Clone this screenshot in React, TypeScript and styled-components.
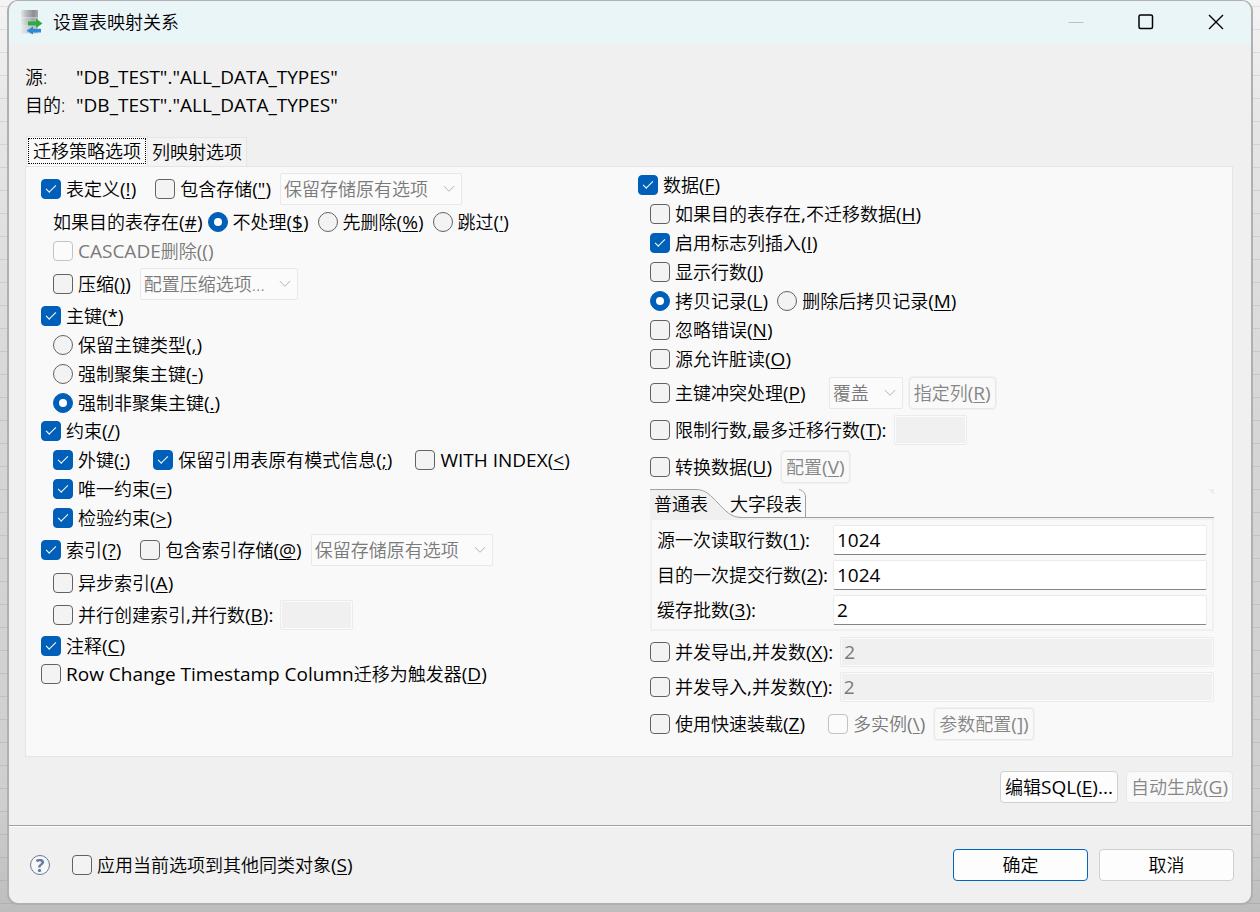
import React, { useId, useState } from "react";
import styled, { createGlobalStyle, css } from "styled-components";

const GlobalStyle = createGlobalStyle`
  *, *::before, *::after { box-sizing: border-box; }
  body {
    margin: 0;
    min-height: 100vh;
    padding: 0 7px 7px;
    font: 350 18px/28px "Open Sans", "Noto Sans CJK SC", sans-serif;
    color: #000;
    background:
      repeating-linear-gradient(to bottom, transparent 0 6px, rgba(0, 0, 0, 0.08) 6px 7px, transparent 7px 23px),
      linear-gradient(to bottom, #f4f4f4 0, #e6e6e6 120px, #d6d6d6 420px, #cfcfcf 800px, #bdbdbd 100%);
  }
  button, input, select { font: inherit; color: inherit; margin: 0; }
  u { text-decoration-thickness: 1px; text-underline-offset: 2px; }
`;

const latinText = css`
  font-size: 19px;
  font-weight: 400;
`;

const Latin = styled.span`
  ${latinText}
  line-height: 1;
`;

const Dialog = styled.main`
  display: flex;
  flex-direction: column;
  border: 2px solid #b0b0b0;
  border-top-width: 1px;
  border-radius: 11px;
  background: #f0f0f0;
  overflow: hidden;
`;

const TitleBar = styled.header`
  display: flex;
  align-items: center;
  height: 43px;
  padding: 0 0 2px 12px;
  background: #eaf5f8;
`;

const Title = styled.h1`
  flex: 1;
  margin: 0 0 0 10px;
  font-size: 18px;
  font-weight: inherit;
`;

const WindowButton = styled.button`
  display: grid;
  place-items: center;
  width: 70px;
  height: 40px;
  padding: 0;
  border: 0;
  background: none;
`;

const Body = styled.div`
  padding: 19px 18px 22px 16px;
`;

const Names = styled.dl`
  display: grid;
  grid-template-columns: 51px 1fr;
  grid-auto-rows: 28px;
  margin: 0 0 17px;
  dd {
    margin: 0;
    ${latinText}
  }
`;

const Tabs = styled.div`
  display: flex;
  align-items: flex-end;
  padding-left: 1px;
`;

const Tab = styled.button<{ $active?: boolean }>`
  height: 29px;
  padding: 0 4px;
  border: 1px solid #e5e5e5;
  border-width: 1px 1px 0 0;
  background: #f3f3f3;
  line-height: 28px;
  ${(p) =>
    p.$active &&
    css`
      height: 30px;
      padding: 0 6px 2px;
      border-left-width: 1px;
      background: #f9f9f9;
      line-height: 24px;
      outline: 1px dotted #000;
      outline-offset: -3px;
    `}
`;

const Panel = styled.section`
  display: grid;
  grid-template-columns: minmax(0, 1fr) minmax(0, 1fr);
  column-gap: 21px;
  padding: 3px 18px 13px 15px;
  border: 1px solid #e5e5e5;
  background: #f9f9f9;
`;

const Column = styled.div`
  min-width: 0;
`;

const Row = styled.div<{ $h?: number; $indent?: boolean; $gap?: number }>`
  display: flex;
  align-items: center;
  gap: ${(p) => p.$gap ?? 9}px;
  height: ${(p) => p.$h ?? 29}px;
  padding-left: ${(p) => (p.$indent ? 12 : 0)}px;
  white-space: nowrap;
`;

const ChoiceLabel = styled.label<{ $disabled?: boolean }>`
  display: flex;
  align-items: center;
  gap: 5px;
  white-space: nowrap;
  color: ${(p) => (p.$disabled ? "#7a7a7a" : "inherit")};
`;

const Mark = styled.input`
  appearance: none;
  flex: none;
  display: grid;
  place-items: center;
  width: 20px;
  height: 20px;
  border: 1px solid #626262;
  background: #f3f3f3;
  &:checked {
    border-color: #005fb8;
    background: #005fb8;
  }
  &:disabled {
    border-color: #c3c3c3;
    background: #fbfbfb;
  }
  &[type="checkbox"] { border-radius: 4px; }
  &[type="checkbox"]:checked::before {
    content: "";
    width: 10px;
    height: 5px;
    margin-bottom: 3px;
    border: solid #fff;
    border-width: 0 0 1px 1px;
    transform: rotate(-45deg);
  }
  &[type="radio"] { border-radius: 50%; }
  &[type="radio"]:checked::before {
    content: "";
    width: 8px;
    height: 8px;
    border-radius: 50%;
    background: #fff;
  }
`;

const SelectBox = styled.span<{ $w: number }>`
  position: relative;
  flex: none;
  width: ${(p) => p.$w}px;
  height: 32px;
  svg {
    position: absolute;
    top: 12px;
    right: 7px;
    pointer-events: none;
  }
`;

const SelectControl = styled.select`
  appearance: none;
  width: 100%;
  height: 32px;
  padding: 0 0 0 3px;
  border: 1px solid #e8e8e8;
  border-radius: 2px;
  background: #fbfbfb;
  color: #7a7a7a;
  opacity: 1;
`;

const TextField = styled.input<{ $w?: number }>`
  ${(p) => (p.$w ? css`flex: none; width: ${p.$w}px;` : css`flex: 1; width: 100%; min-width: 0;`)}
  ${latinText}
  height: 30px;
  padding: 0 3px;
  border: 1px solid #ebebeb;
  border-bottom-color: #858585;
  border-radius: 2px;
  background: #fff;
  &:disabled {
    border-color: #ebebeb;
    background: #f0f0f0;
    box-shadow: inset 0 0 0 1px #fbfbfb;
    color: #7a7a7a;
  }
`;

const PushButton = styled.button<{ $wide?: boolean; $primary?: boolean; $halo?: boolean }>`
  flex: none;
  height: 32px;
  width: ${(p) => (p.$wide ? "135px" : "auto")};
  padding: 0 4px;
  border: 1px solid ${(p) => (p.$primary ? "#0067c0" : "#d0d0d0")};
  border-radius: 4px;
  background: #fdfdfd;
  line-height: 28px;
  white-space: nowrap;
  &:disabled {
    border-color: #e8e8e8;
    background: #f9f9f9;
    color: #868686;
  }
  ${(p) => p.$halo && css`box-shadow: 0 0 0 1px #f0f0f0;`}
`;

const FolderTabs = styled.div`
  display: flex;
  height: 29px;
  margin: 3px 0 0 12px;
  border-bottom: 1px solid #a0a0a0;
`;

const FolderTab = styled.button<{ $active?: boolean }>`
  position: relative;
  width: ${(p) => (p.$active ? 80 : 76)}px;
  height: 29px;
  padding: 0;
  padding-left: ${(p) => (p.$active ? 4 : 0)}px;
  border: 0;
  background: none;
  text-align: left;
  line-height: 28px;
  svg {
    position: absolute;
    top: 0;
    left: 0;
    overflow: visible;
  }
  span { position: relative; }
`;

const FolderCorner = styled.svg`
  margin-left: auto;
`;

const FolderBody = styled.div`
  margin: 0 0 3px 12px;
  padding: 2px 5px 2px;
  border: 2px solid #f0f0f0;
`;

const FieldRow = styled.div`
  display: grid;
  grid-template-columns: 171px 1fr;
  column-gap: 5px;
  align-items: center;
  height: 35px;
  white-space: nowrap;
`;

const Actions = styled.div`
  display: flex;
  justify-content: flex-end;
  gap: 8px;
  margin-top: 14px;
`;

const Footer = styled.footer`
  display: flex;
  align-items: center;
  padding: 23px 17px 22px 21px;
  border-top: 1px solid #a0a0a0;
  box-shadow: inset 0 1px 0 #fff;
`;

const HelpButton = styled.button`
  width: 20px;
  height: 20px;
  margin-right: 22px;
  padding: 0;
  border: 1px solid #65789b;
  border-radius: 50%;
  background: #f7f8fa;
  color: #65789b;
  font-weight: 700;
  font-size: 18px;
  line-height: 18px;
`;

const FooterButtons = styled.div`
  display: flex;
  gap: 11px;
  margin-left: auto;
`;

type KeyedProps = { text: string; k: string; after?: string };

/** Caption followed by its access key in parentheses; Latin runs get their own face. */
function Keyed({ text, k, after = "" }: KeyedProps) {
  const runs = text.split(/([\x20-\x7e]+)/).filter(Boolean);
  return (
    <span>
      {runs.map((run, i) => (/^[\x20-\x7e]/.test(run) ? <Latin key={i}>{run}</Latin> : run))}
      <Latin>
        (<u>{k}</u>){after}
      </Latin>
    </span>
  );
}

type ChoiceProps = KeyedProps & {
  radio?: string;
  checked?: boolean;
  disabled?: boolean;
};

function Choice({ radio, checked, disabled, ...keyed }: ChoiceProps) {
  return (
    <ChoiceLabel $disabled={disabled}>
      <Mark type={radio ? "radio" : "checkbox"} name={radio} defaultChecked={checked} disabled={disabled} />
      <Keyed {...keyed} />
    </ChoiceLabel>
  );
}

function Select({ label, value, w }: { label: string; value: string; w: number }) {
  return (
    <SelectBox $w={w}>
      <SelectControl aria-label={label} disabled defaultValue={value}>
        <option>{value}</option>
      </SelectControl>
      <svg width="12" height="8" viewBox="0 0 12 8" fill="none" stroke="#b4b4b4" aria-hidden="true">
        <path d="M0.8 1L6 6.3L11.2 1" />
      </svg>
    </SelectBox>
  );
}

function Field({ value, ...keyed }: KeyedProps & { value: string }) {
  const id = useId();
  return (
    <FieldRow>
      <label htmlFor={id}>
        <Keyed {...keyed} />
      </label>
      <TextField id={id} defaultValue={value} />
    </FieldRow>
  );
}

function AppIcon() {
  return (
    <svg width="22" height="26" viewBox="0 0 22 26" aria-hidden="true">
      <defs>
        <linearGradient id="server" x1="0" x2="1">
          <stop offset="0" stopColor="#e2e6e7" />
          <stop offset="0.3" stopColor="#b9bcbd" />
          <stop offset="0.75" stopColor="#8b8e8f" />
          <stop offset="1" stopColor="#a8abac" />
        </linearGradient>
      </defs>
      <rect x="0" y="1" width="17" height="7.500" fill="url(#server)" />
      <rect x="0" y="9" width="17" height="7.500" fill="url(#server)" opacity="0.75" />
      <rect x="0" y="17" width="17" height="7.500" fill="url(#server)" opacity="0.5" />
      <path d="M7 12.500H15V9.500L21.500 14.500L15 19V16.500H7Z" fill="#2eaa3f" />
      <path d="M20 19.800H12V17.500L5.500 21.700L12 25.500V23.500H20Z" fill="#3487d3" />
    </svg>
  );
}

export default function App() {
  const [tab, setTab] = useState(0);
  const [folder, setFolder] = useState(0);

  return (
    <>
      <GlobalStyle />
      <Dialog>
        <TitleBar>
          <AppIcon />
          <Title>设置表映射关系</Title>
          <WindowButton aria-label="最小化" disabled>
            <svg width="16" height="16" stroke="#b9c2c4" aria-hidden="true">
              <path d="M0.500 8.500H15.500" />
            </svg>
          </WindowButton>
          <WindowButton aria-label="最大化">
            <svg width="16" height="16" fill="none" stroke="#000" strokeWidth="1.5" aria-hidden="true">
              <rect x="1" y="1" width="13.500" height="13.500" rx="1.500" />
            </svg>
          </WindowButton>
          <WindowButton aria-label="关闭">
            <svg width="16" height="16" fill="none" stroke="#000" strokeWidth="1.4" aria-hidden="true">
              <path d="M1 1L15 15M15 1L1 15" />
            </svg>
          </WindowButton>
        </TitleBar>

        <Body>
          <Names>
            <dt>源:</dt>
            <dd>"DB_TEST"."ALL_DATA_TYPES"</dd>
            <dt>目的:</dt>
            <dd>"DB_TEST"."ALL_DATA_TYPES"</dd>
          </Names>

          <Tabs role="tablist">
            <Tab role="tab" aria-selected={tab === 0} $active={tab === 0} onClick={() => setTab(0)}>
              迁移策略选项
            </Tab>
            <Tab role="tab" aria-selected={tab === 1} $active={tab === 1} onClick={() => setTab(1)}>
              列映射选项
            </Tab>
          </Tabs>

          <Panel>
            <Column>
              <Row $h={37}>
                <Row $gap={19}>
                  <Choice text="表定义" k="!" checked />
                  <Choice text="包含存储" k={'"'} />
                </Row>
                <Select label="表存储选项" value="保留存储原有选项" w={182} />
              </Row>
              <Row $h={30} $indent>
                <Row $gap={5}>
                  <Keyed text="如果目的表存在" k="#" />
                  <Choice text="不处理" k="$" radio="exists" checked />
                </Row>
                <Choice text="先删除" k="%" radio="exists" />
                <Choice text="跳过" k="'" radio="exists" />
              </Row>
              <Row $h={28} $indent>
                <Choice text="CASCADE删除" k="(" disabled />
              </Row>
              <Row $h={37} $indent>
                <Choice text="压缩" k=")" />
                <Select label="压缩选项" value="配置压缩选项..." w={158} />
              </Row>
              <Row $h={28}>
                <Choice text="主键" k="*" checked />
              </Row>
              <Row $indent>
                <Choice text="保留主键类型" k="," radio="pk" />
              </Row>
              <Row $indent>
                <Choice text="强制聚集主键" k="-" radio="pk" />
              </Row>
              <Row $indent>
                <Choice text="强制非聚集主键" k="." radio="pk" checked />
              </Row>
              <Row $h={28}>
                <Choice text="约束" k="/" checked />
              </Row>
              <Row $indent $gap={23}>
                <Choice text="外键" k=":" checked />
                <Choice text="保留引用表原有模式信息" k=";" checked />
                <Choice text="WITH INDEX" k="<" />
              </Row>
              <Row $indent>
                <Choice text="唯一约束" k="=" checked />
              </Row>
              <Row $indent>
                <Choice text="检验约束" k=">" checked />
              </Row>
              <Row $h={36}>
                <Row $gap={19}>
                  <Choice text="索引" k="?" checked />
                  <Choice text="包含索引存储" k="@" />
                </Row>
                <Select label="索引存储选项" value="保留存储原有选项" w={182} />
              </Row>
              <Row $indent>
                <Choice text="异步索引" k="A" />
              </Row>
              <Row $h={35} $indent $gap={7}>
                <Choice text="并行创建索引,并行数" k="B" after=":" />
                <TextField $w={73} aria-label="并行数" disabled />
              </Row>
              <Row $h={28}>
                <Choice text="注释" k="C" checked />
              </Row>
              <Row $h={28}>
                <Choice text="Row Change Timestamp Column迁移为触发器" k="D" />
              </Row>
            </Column>

            <Column>
              <Row>
                <Choice text="数据" k="F" checked />
              </Row>
              <Row $indent>
                <Choice text="如果目的表存在,不迁移数据" k="H" />
              </Row>
              <Row $indent>
                <Choice text="启用标志列插入" k="I" checked />
              </Row>
              <Row $indent>
                <Choice text="显示行数" k="J" />
              </Row>
              <Row $indent>
                <Choice text="拷贝记录" k="L" radio="copy" checked />
                <Choice text="删除后拷贝记录" k="M" radio="copy" />
              </Row>
              <Row $indent>
                <Choice text="忽略错误" k="N" />
              </Row>
              <Row $indent>
                <Choice text="源允许脏读" k="O" />
              </Row>
              <Row $h={39} $indent $gap={23}>
                <Choice text="主键冲突处理" k="P" />
                <Row $gap={6}>
                  <Select label="冲突处理方式" value="覆盖" w={74} />
                  <PushButton disabled $halo>
                    <Keyed text="指定列" k="R" />
                  </PushButton>
                </Row>
              </Row>
              <Row $h={36} $indent $gap={7}>
                <Choice text="限制行数,最多迁移行数" k="T" after=":" />
                <TextField $w={73} aria-label="最多迁移行数" disabled />
              </Row>
              <Row $h={38} $indent>
                <Choice text="转换数据" k="U" />
                <PushButton disabled $halo>
                  <Keyed text="配置" k="V" />
                </PushButton>
              </Row>

              <FolderTabs role="tablist">
                <FolderTab role="tab" aria-selected={folder === 0} $active onClick={() => setFolder(0)}>
                  <svg width="92" height="29" aria-hidden="true">
                    <path d="M0 0.500H46C56 0.500 61 7 68 14S80 28.500 92 28.500V29H0Z" fill="#f0f0f0" />
                    <path d="M0 0.500H46C56 0.500 61 7 68 14S80 28.500 92 28.500" fill="none" stroke="#a0a0a0" />
                  </svg>
                  <span>普通表</span>
                </FolderTab>
                <FolderTab role="tab" aria-selected={folder === 1} onClick={() => setFolder(1)}>
                  <svg width="76" height="28" fill="none" stroke="#a0a0a0" aria-hidden="true">
                    <path d="M69 0.500C73 1.500 75.500 4 75.500 8V28" />
                  </svg>
                  <span>大字段表</span>
                </FolderTab>
                <FolderCorner width="6" height="6" aria-hidden="true">
                  <path d="M0 0H6V6Z" fill="#ededed" />
                </FolderCorner>
              </FolderTabs>
              <FolderBody>
                <Field text="源一次读取行数" k="1" after=":" value="1024" />
                <Field text="目的一次提交行数" k="2" after=":" value="1024" />
                <Field text="缓存批数" k="3" after=":" value="2" />
              </FolderBody>

              <Row $h={35} $indent $gap={7}>
                <Choice text="并发导出,并发数" k="X" after=":" />
                <TextField aria-label="导出并发数" defaultValue="2" disabled />
              </Row>
              <Row $h={35} $indent $gap={7}>
                <Choice text="并发导入,并发数" k="Y" after=":" />
                <TextField aria-label="导入并发数" defaultValue="2" disabled />
              </Row>
              <Row $h={39} $indent $gap={23}>
                <Choice text="使用快速装载" k="Z" />
                <Row>
                  <Choice text="多实例" k="\" disabled />
                  <PushButton disabled $halo>
                    <Keyed text="参数配置" k="]" />
                  </PushButton>
                </Row>
              </Row>
            </Column>
          </Panel>

          <Actions>
            <PushButton>
              <Keyed text="编辑SQL" k="E" after="..." />
            </PushButton>
            <PushButton disabled>
              <Keyed text="自动生成" k="G" />
            </PushButton>
          </Actions>
        </Body>

        <Footer>
          <HelpButton aria-label="帮助">?</HelpButton>
          <Choice text="应用当前选项到其他同类对象" k="S" />
          <FooterButtons>
            <PushButton $wide $primary>
              确定
            </PushButton>
            <PushButton $wide>取消</PushButton>
          </FooterButtons>
        </Footer>
      </Dialog>
    </>
  );
}
